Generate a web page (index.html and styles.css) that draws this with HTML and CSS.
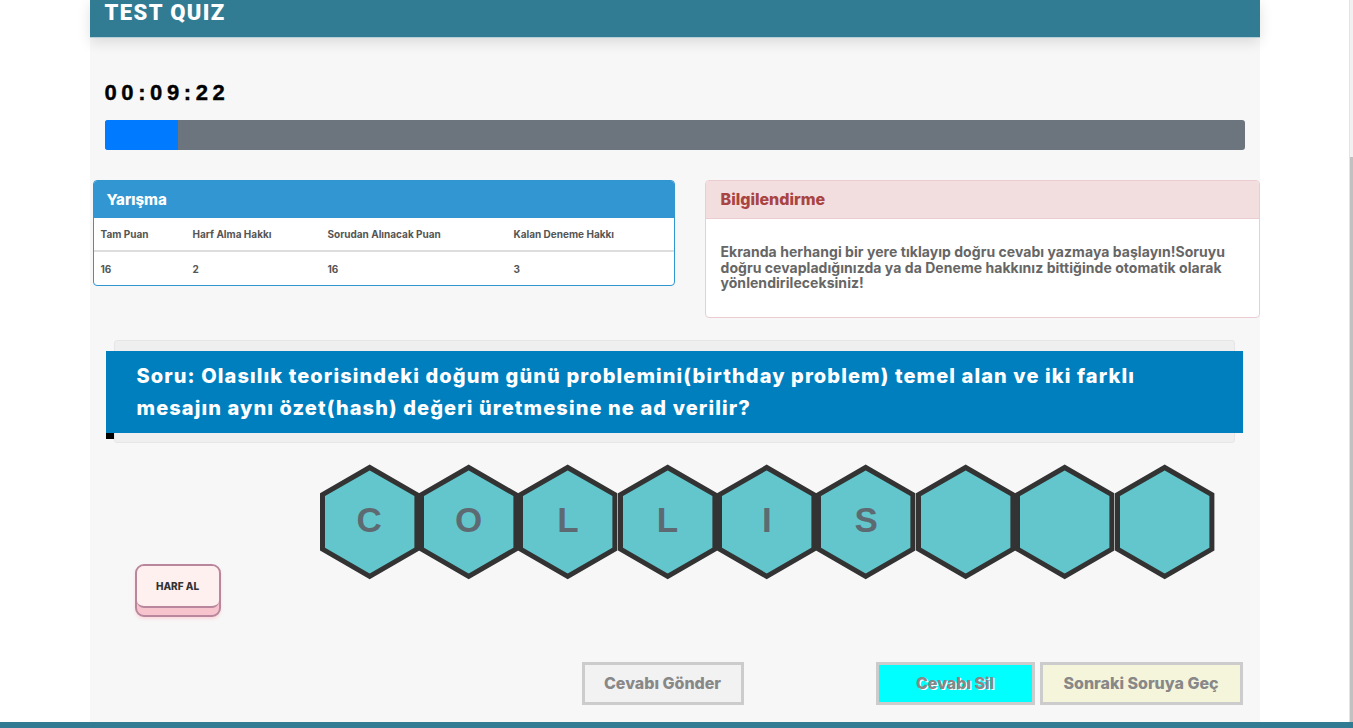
FILE: index.html
```html
<!DOCTYPE html>
<html lang="tr">
<head>
<meta charset="utf-8">
<title>Test Quiz</title>
<link rel="stylesheet" href="styles.css">
</head>
<body>
<div class="page">
  <div class="viewport">
    <div class="container">
      <header class="topbar"><h1>TEST QUIZ</h1></header>
      <div class="timer">00:09:22</div>
      <div class="progress"><div class="progress-fill" style="width:73px"></div></div>

      <div class="cards">
        <div class="card card-blue">
          <div class="card-head">Yarışma</div>
          <table class="stats">
            <thead>
              <tr><th class="c1">Tam Puan</th><th class="c2">Harf Alma Hakkı</th><th class="c3">Sorudan Alınacak Puan</th><th>Kalan Deneme Hakkı</th></tr>
            </thead>
            <tbody>
              <tr><td>16</td><td>2</td><td>16</td><td>3</td></tr>
            </tbody>
          </table>
        </div>
        <div class="card card-red">
          <div class="card-head">Bilgilendirme</div>
          <div class="card-body">Ekranda herhangi bir yere tıklayıp doğru cevabı yazmaya başlayın!Soruyu<br>doğru cevapladığınızda ya da Deneme hakkınız bittiğinde otomatik olarak<br>yönlendirileceksiniz!</div>
        </div>
      </div>

      <div class="question-wrap">
        <div class="question">Soru: Olasılık teorisindeki doğum günü problemini(birthday problem) temel alan ve iki farklı<br>mesajın aynı özet(hash) değeri üretmesine ne ad verilir?</div>
      </div>

      <div class="play">
        <div class="side">
          <button class="harf" type="button"><span class="harf-face">HARF AL</span></button>
        </div>
        <div class="hexes">
          <div class="hex"><svg viewBox="0 0 99.4 116"><polygon points="49.7,3.5 96.9,30.7 96.9,85.1 49.7,112.3 2.5,85.1 2.5,30.7"/></svg><span>C</span></div>
          <div class="hex"><svg viewBox="0 0 99.4 116"><polygon points="49.7,3.5 96.9,30.7 96.9,85.1 49.7,112.3 2.5,85.1 2.5,30.7"/></svg><span>O</span></div>
          <div class="hex"><svg viewBox="0 0 99.4 116"><polygon points="49.7,3.5 96.9,30.7 96.9,85.1 49.7,112.3 2.5,85.1 2.5,30.7"/></svg><span>L</span></div>
          <div class="hex"><svg viewBox="0 0 99.4 116"><polygon points="49.7,3.5 96.9,30.7 96.9,85.1 49.7,112.3 2.5,85.1 2.5,30.7"/></svg><span>L</span></div>
          <div class="hex"><svg viewBox="0 0 99.4 116"><polygon points="49.7,3.5 96.9,30.7 96.9,85.1 49.7,112.3 2.5,85.1 2.5,30.7"/></svg><span>I</span></div>
          <div class="hex"><svg viewBox="0 0 99.4 116"><polygon points="49.7,3.5 96.9,30.7 96.9,85.1 49.7,112.3 2.5,85.1 2.5,30.7"/></svg><span>S</span></div>
          <div class="hex"><svg viewBox="0 0 99.4 116"><polygon points="49.7,3.5 96.9,30.7 96.9,85.1 49.7,112.3 2.5,85.1 2.5,30.7"/></svg><span></span></div>
          <div class="hex"><svg viewBox="0 0 99.4 116"><polygon points="49.7,3.5 96.9,30.7 96.9,85.1 49.7,112.3 2.5,85.1 2.5,30.7"/></svg><span></span></div>
          <div class="hex"><svg viewBox="0 0 99.4 116"><polygon points="49.7,3.5 96.9,30.7 96.9,85.1 49.7,112.3 2.5,85.1 2.5,30.7"/></svg><span></span></div>
        </div>
      </div>

      <div class="actions">
        <button class="btn btn-send" type="button">Cevabı Gönder</button>
        <button class="btn btn-clear" type="button">Cevabı Sil</button>
        <button class="btn btn-next" type="button">Sonraki Soruya Geç</button>
      </div>
    </div>
  </div>
  <div class="scroll"><div class="thumb"></div></div>
</div>
<footer class="footer"></footer>
</body>
</html>
```

FILE: styles.css
```css
* { box-sizing: border-box; margin: 0; padding: 0; }
html, body { height: 100%; }
body {
  background: #fff;
  font-family: "Inter", "Noto Sans", sans-serif;
  overflow: hidden;
}
.page { display: flex; height: 722px; }
.viewport { flex: 1; }
.container {
  width: 1170px;
  margin: 0 auto;
  height: 722px;
  background: #f7f7f7;
}
.scroll {
  width: 4px;
  background: #f1f1f1;
  border-left: 1px solid #e4e4e4;
  display: flex;
  flex-direction: column;
  padding-top: 157px;
}
.thumb { flex: 1; background: #c1c1c1; }
.footer { height: 6px; background: #317c93; }

.topbar {
  height: 38px;
  background: #317c93;
  padding-left: 15px;
  box-shadow: 0 4px 14px rgba(0, 0, 0, 0.12);
  border-bottom: 1px solid #b8cfd6;
}
.topbar h1 {
  font-family: "Roboto", "Liberation Sans", sans-serif;
  font-weight: 900;
  font-size: 22px;
  line-height: 26px;
  letter-spacing: 1.4px;
  color: #fff;
}

.timer {
  margin: 42px 0 0 15px;
  font-family: "Liberation Sans", Arial, sans-serif;
  font-weight: 700;
  font-size: 22px;
  line-height: 26px;
  letter-spacing: 4.6px;
  color: #000;
  -webkit-text-stroke: 0.4px #000;
}

.progress {
  margin: 14px 15px 0;
  height: 30px;
  background: #6c757d;
  border-radius: 3px;
  overflow: hidden;
}
.progress-fill { height: 100%; background: #007bff; }

.cards {
  display: flex;
  align-items: flex-start;
  gap: 30px;
  margin-top: 30px;
  padding-left: 3px;
}
.card { background: #fff; border-radius: 4px; overflow: hidden; }
.card-blue { width: 582px; border: 1px solid #3096d0; }
.card-blue .card-head {
  height: 37px;
  line-height: 37px;
  background: #3196d1;
  color: #fff;
  font-size: 15px;
  font-weight: 800;
  padding-left: 13px;
}
.stats {
  width: 100%;
  border-collapse: collapse;
  font-size: 10px;
  font-weight: 700;
  color: #555;
}
.stats th {
  text-align: left;
  font-weight: 700;
  height: 33px;
  padding: 0 7px;
  border-bottom: 2px solid #ddd;
}
.stats td { height: 34px; padding: 0 7px; }
.stats .c1 { width: 92px; }
.stats .c2 { width: 135px; }
.stats .c3 { width: 186px; }

.card-red { flex: 1; border: 1px solid #ebccd1; }
.card-red .card-head {
  height: 38px;
  line-height: 37px;
  background: #f2dede;
  color: #a94442;
  font-size: 16px;
  font-weight: 800;
  padding-left: 15px;
  border-bottom: 1px solid #ebccd1;
}
.card-body {
  padding: 25px 2px 26px 15px;
  font-size: 14px;
  font-weight: 700;
  line-height: 15.5px;
  letter-spacing: 0.05px;
  color: #666;
  white-space: nowrap;
}

.question-wrap {
  margin: 22px 25px 0 24px;
  background: #efefef;
  border: 1px solid #e6e6e6;
  border-radius: 3px;
  padding: 10px 0 9px;
}
.question {
  position: relative;
  margin: 0 -9px;
  background: #007fbf;
  color: #fff;
  font-size: 20px;
  font-weight: 800;
  line-height: 32px;
  letter-spacing: 1.1px;
  padding: 9px 31px;
  white-space: nowrap;
}
.question::after {
  content: "";
  position: absolute;
  left: 0;
  top: 100%;
  width: 8px;
  height: 6px;
  background: #000;
}

.play { display: flex; margin-top: 21px; }
.side { width: 230px; padding: 100px 0 0 45px; }
.harf {
  display: block;
  width: 86px;
  border: 2px solid #b8879d;
  border-radius: 9px;
  background: #f7c3cd;
  padding: 0 0 7px;
  box-shadow: 0 2px 3px rgba(255, 190, 200, 0.5);
  cursor: pointer;
  font-family: inherit;
}
.harf-face {
  display: block;
  height: 42px;
  line-height: 40px;
  background: #fff0f0;
  border-bottom: 2px solid #b8879d;
  border-radius: 7px;
  font-size: 10px;
  font-weight: 800;
  color: #333;
}
.hexes { display: flex; }
.hex {
  width: 99.4px;
  height: 116px;
  display: grid;
}
.hex svg, .hex span { grid-area: 1 / 1; }
.hex svg { width: 99.4px; height: 116px; overflow: visible; }
.hex polygon {
  fill: #63c6cc;
  stroke: #333;
  stroke-width: 5;
  stroke-linejoin: miter;
}
.hex span {
  display: flex;
  align-items: center;
  justify-content: center;
  font-family: "Liberation Sans", Arial, sans-serif;
  font-weight: 700;
  font-size: 35px;
  color: #5e6a71;
  padding-bottom: 3px;
}

.actions {
  display: flex;
  justify-content: flex-end;
  margin-top: 45px;
  padding-right: 17px;
}
.btn {
  height: 43px;
  border: 3px solid #ccc;
  font-family: inherit;
  font-size: 16px;
  font-weight: 800;
  color: #888;
  cursor: pointer;
}
.btn-send { width: 162px; background: #f2f2f2; margin-right: 132px; }
.btn-clear { width: 159px; background: #00ffff; margin-right: 5px; text-shadow: 1px 1px 0 #fff; }
.btn-next { width: 203px; background: #f5f5dc; }
```
